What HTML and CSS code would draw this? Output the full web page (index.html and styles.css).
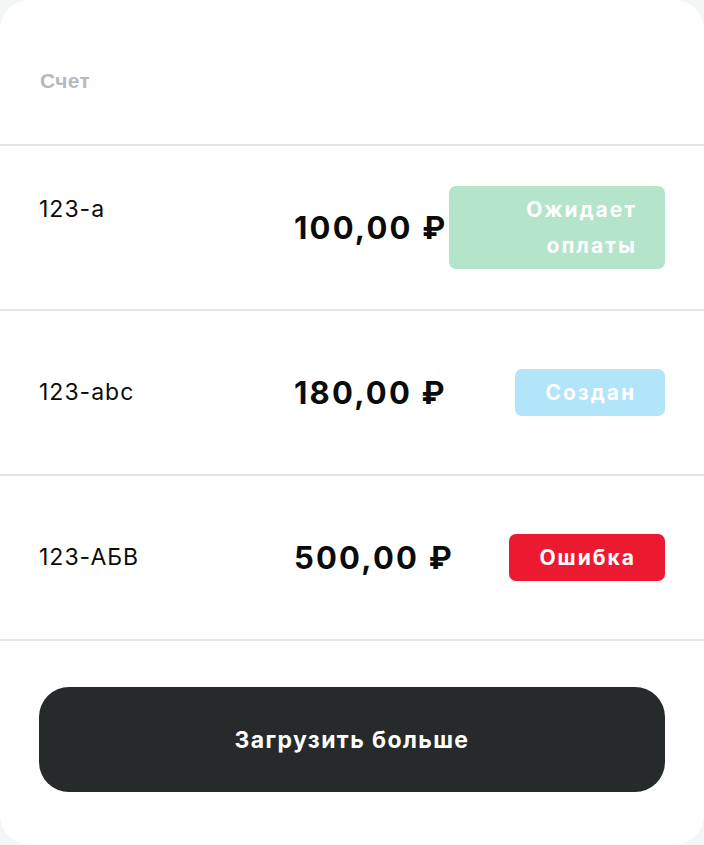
FILE: index.html
```html
<!DOCTYPE html>
<html lang="ru">
<head>
<meta charset="utf-8">
<title>Счета</title>
<link rel="stylesheet" href="styles.css">
</head>
<body>
<div class="card">
  <div class="header"><span class="header-title">Счет</span></div>
  <div class="row">
    <div class="row-grid">
      <div class="id">123-a</div>
      <div class="amount">100,00 ₽</div>
      <div class="status-cell"><span class="badge badge-wait">Ожидает<br>оплаты</span></div>
    </div>
  </div>
  <div class="row">
    <div class="row-grid">
      <div class="id">123-abc</div>
      <div class="amount">180,00 ₽</div>
      <div class="status-cell"><span class="badge badge-new">Создан</span></div>
    </div>
  </div>
  <div class="row">
    <div class="row-grid">
      <div class="id">123-АБВ</div>
      <div class="amount">500,00 ₽</div>
      <div class="status-cell"><span class="badge badge-error">Ошибка</span></div>
    </div>
  </div>
  <div class="footer">
    <button class="load-more">Загрузить больше</button>
  </div>
</div>
</body>
</html>
```
FILE: styles.css
```css
html, body {
  margin: 0;
  padding: 0;
  background: #f4f5f6;
}
body {
  font-family: "Inter", "Noto Sans", sans-serif;
  color: #0b0b0b;
}
.card {
  background: #ffffff;
  border-radius: 30px;
  height: 845px;
  box-sizing: border-box;
  display: flex;
  flex-direction: column;
}
.header {
  height: 146px;
  box-sizing: border-box;
  padding: 18px 40px 0;
  display: flex;
  align-items: center;
  border-bottom: 2px solid #e5e5e6;
}
.header-title {
  font-family: "Liberation Sans", Arial, sans-serif;
  font-weight: 700;
  font-size: 21px;
  letter-spacing: 0.3px;
  color: #b8b7c4;
}
.row {
  height: 165px;
  box-sizing: border-box;
  border-bottom: 2px solid #e5e5e6;
  display: flex;
  align-items: center;
  padding: 0 39px;
}
.row-grid {
  width: 100%;
  display: grid;
  grid-template-columns: 255px 155px 1fr;
  align-items: baseline;
}
.id {
  font-size: 23px;
  font-weight: 400;
  letter-spacing: 1px;
}
.amount {
  align-self: center;
  font-size: 31px;
  font-weight: 700;
  letter-spacing: 2.2px;
  white-space: nowrap;
}
.status-cell {
  display: flex;
  justify-content: flex-end;
}
.badge {
  display: inline-block;
  padding: 6px 30px 5px 30px;
  border-radius: 7px;
  color: #ffffff;
  font-size: 21px;
  font-weight: 700;
  letter-spacing: 2px;
  line-height: 36px;
  text-align: right;
}
.badge-wait {
  background: #b4e4ca;
  width: 156px;
  padding-right: 28px;
  padding-left: 32px;
}
.badge-new {
  background: #b2e4fa;
  padding-right: 29px;
}
.badge-error {
  background: #ec1a31;
  padding-right: 29px;
}
.footer {
  padding: 46px 39px 0;
}
.load-more {
  width: 100%;
  height: 105px;
  border: none;
  border-radius: 30px;
  background: #272a2b;
  color: #ffffff;
  font-family: "Inter", "Noto Sans", sans-serif;
  font-size: 23px;
  font-weight: 700;
  letter-spacing: 1.4px;
  cursor: pointer;
}
```
